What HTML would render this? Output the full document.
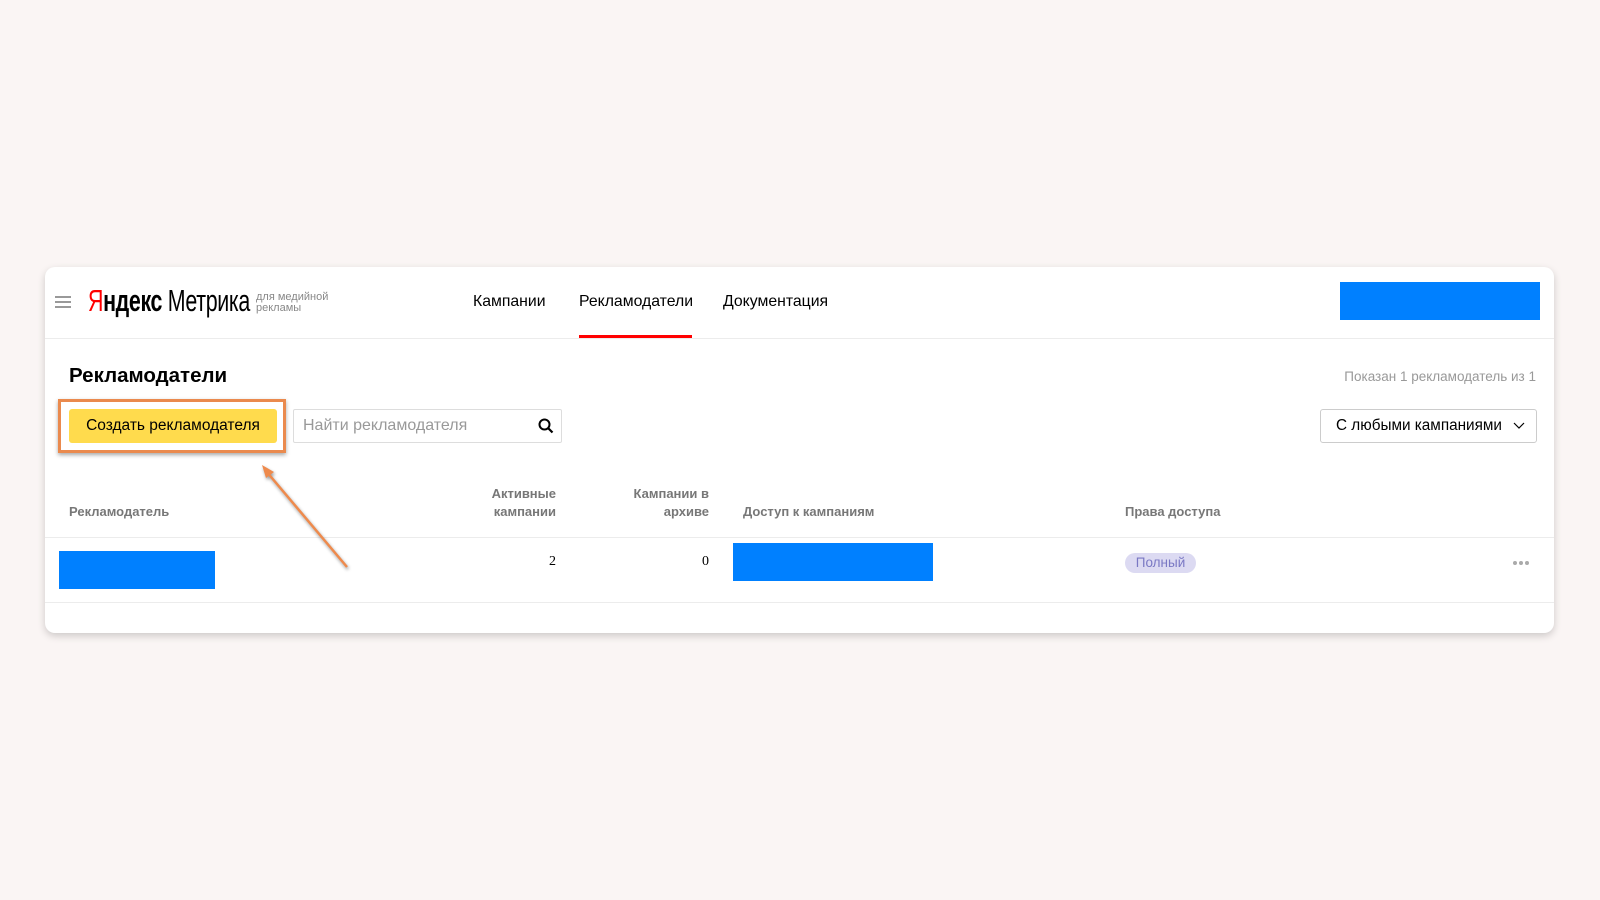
<!DOCTYPE html>
<html><head><meta charset="utf-8"><style>
*{margin:0;padding:0;box-sizing:border-box}
body{width:1600px;height:900px;background:#faf5f4;font-family:"Liberation Sans",sans-serif;position:relative;overflow:hidden;color:#000}
.a{position:absolute;white-space:nowrap}
.card{position:absolute;left:45px;top:267px;width:1509px;height:366px;background:#fff;border-radius:10px;box-shadow:0 3px 8px rgba(0,0,0,.18)}
.hl{position:absolute;left:45px;width:1509px;height:1px;background:#ececec}
.blue{position:absolute;background:#0080ff}
.th{font-size:13px;font-weight:bold;color:#777;line-height:18px}
</style></head><body>
<div class="card"></div>
<div class="a" style="left:55px;top:296px;width:16px;height:2px;background:#999;box-shadow:0 5px 0 #999,0 10px 0 #999"></div>
<div class="a" style="left:88px;top:284px;font-size:31px;line-height:34px;transform:scaleX(.69);transform-origin:left top;letter-spacing:-0.5px"><span style="color:#f00">Я</span><span style="font-weight:bold">ндекс</span> <span>Метрика</span></div>
<div class="a" style="left:256px;top:292px;font-size:11px;line-height:11px;color:#888">для медийной<br>рекламы</div>
<div class="a" style="left:473px;top:293px;font-size:15.8px">Кампании</div>
<div class="a" style="left:579px;top:293px;font-size:15.8px">Рекламодатели</div>
<div class="a" style="left:579px;top:335px;width:113px;height:3px;background:#f00"></div>
<div class="a" style="left:723px;top:293px;font-size:15.8px">Документация</div>
<div class="blue" style="left:1340px;top:282px;width:200px;height:38px"></div>
<div class="hl" style="top:338px"></div>
<div class="a" style="left:69px;top:364px;font-size:20.5px;font-weight:bold">Рекламодатели</div>
<div class="a" style="right:64px;top:369px;font-size:13.5px;color:#999">Показан 1 рекламодатель из 1</div>
<div class="a" style="left:58px;top:399px;width:228px;height:54px;border:3px solid #ea8a4e;box-shadow:0 2px 4px rgba(0,0,0,.35)"></div>
<div class="a" style="left:69px;top:409px;width:208px;height:34px;background:#ffdb4d;border-radius:3px;font-size:15.5px;line-height:34px;text-align:center">Создать рекламодателя</div>
<div class="a" style="left:293px;top:409px;width:269px;height:34px;border:1px solid #ddd;border-radius:2px;font-size:16px;line-height:32px;padding-left:9px;color:#999">Найти рекламодателя</div>
<svg class="a" style="left:538px;top:418px" width="16" height="16" viewBox="0 0 16 16"><circle cx="6.5" cy="6.5" r="5" fill="none" stroke="#000" stroke-width="2"/><path d="M10 10l4.5 4.5" stroke="#000" stroke-width="2.2"/></svg>
<div class="a" style="left:1320px;top:409px;width:217px;height:34px;border:1px solid #ccc;border-radius:3px;font-size:15.3px;line-height:32px;padding-left:15px">С любыми кампаниями</div>
<svg class="a" style="left:1513px;top:422px" width="12" height="8" viewBox="0 0 12 8"><path d="M1 1l5 5 5-5" fill="none" stroke="#000" stroke-width="1.2"/></svg>
<div class="a th" style="left:69px;top:503px">Рекламодатель</div>
<div class="a th" style="right:1044px;top:485px;text-align:right">Активные<br>кампании</div>
<div class="a th" style="right:891px;top:485px;text-align:right">Кампании в<br>архиве</div>
<div class="a th" style="left:743px;top:503px">Доступ к кампаниям</div>
<div class="a th" style="left:1125px;top:503px">Права доступа</div>
<div class="hl" style="top:537px"></div>
<div class="blue" style="left:59px;top:551px;width:156px;height:38px"></div>
<div class="a" style="right:1044px;top:554px;font-size:14px;font-family:'Liberation Serif',serif">2</div>
<div class="a" style="right:891px;top:554px;font-size:14px;font-family:'Liberation Serif',serif">0</div>
<div class="blue" style="left:733px;top:543px;width:200px;height:38px"></div>
<div class="a" style="left:1125px;top:553px;width:71px;height:20px;border-radius:10px;background:#dcdaf2;color:#7a78c4;font-size:13.5px;line-height:20px;text-align:center">Полный</div>
<div class="a" style="left:1513px;top:561px;width:4px;height:4px;border-radius:50%;background:#aaa;box-shadow:6px 0 0 #aaa,12px 0 0 #aaa"></div>
<div class="hl" style="top:602px"></div>
<svg class="a" style="left:0;top:0" width="1600" height="900"><g style="filter:drop-shadow(1px 2px 1.5px rgba(0,0,0,.4))"><path d="M347 567L266 471" stroke="#ee8a4c" stroke-width="2.5"/><path d="M262 465l12 7-8 6z" fill="#ee8a4c"/></g></svg>
</body></html>
